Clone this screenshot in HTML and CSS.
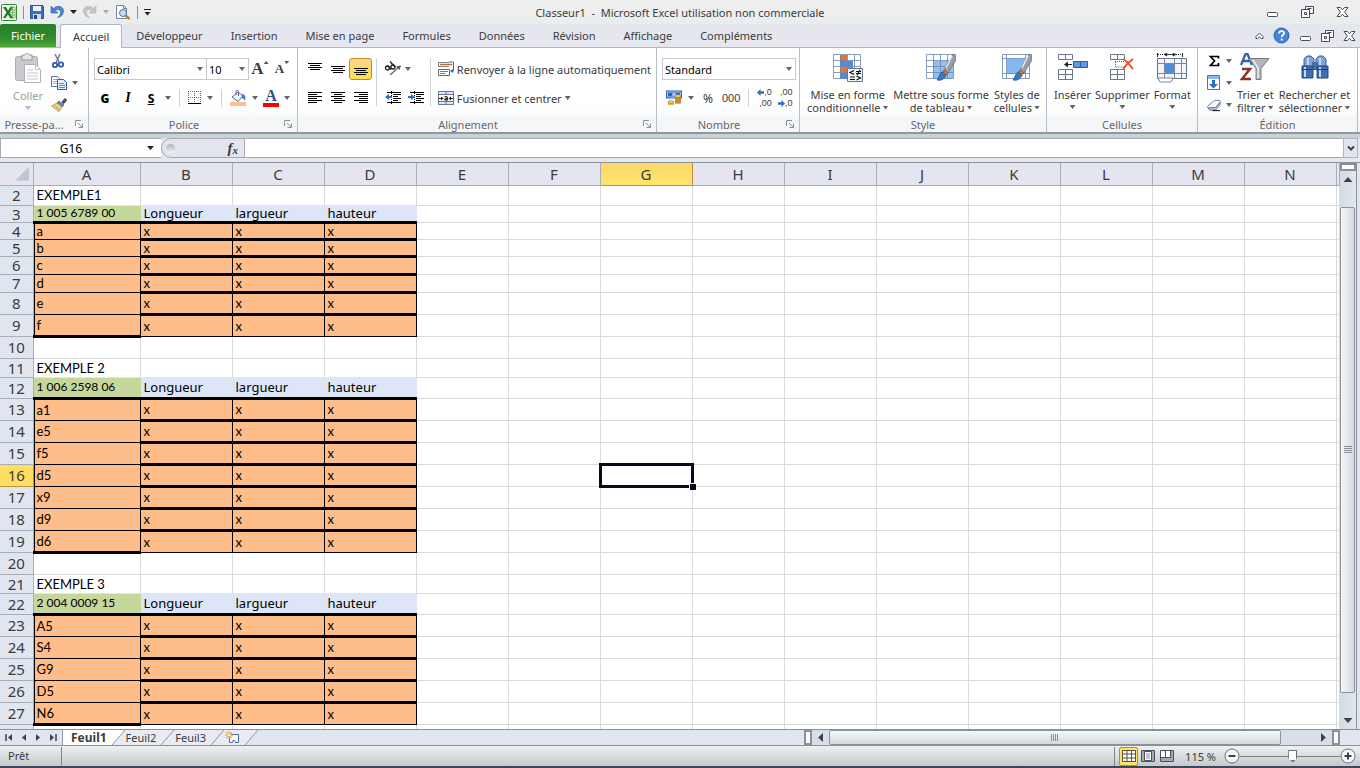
FILE: index.html
```html
<!DOCTYPE html>
<html lang="fr">
<head>
  <meta charset="UTF-8">
  <meta name="viewport" content="width=device-width, initial-scale=1.0">
  <title>Classeur1 - Microsoft Excel</title>
  <link rel="stylesheet" href="styles.css">
</head>
<body>
  <!-- Shared icons -->
  <svg class="defs" aria-hidden="true">
    <symbol id="i-launch" viewBox="0 0 8 8"><path d="M.5 6V.5H6M3.5 7.5h4v-4M3 3l4 4" fill="none" stroke="#8a9097"/></symbol>
    <symbol id="i-min" viewBox="0 0 13 12"><rect x="1.5" y="6.500" width="10" height="4" rx="1" fill="#fff" stroke="#454a5c"/></symbol>
    <symbol id="i-restore" viewBox="0 0 13 12"><path d="M4.500.5h8v7h-8zM6.500 2.500h4" fill="#fff" stroke="#454a5c"/><path d="M.5 3.500h8v8h-8z" fill="#fff" stroke="#454a5c"/><path d="M3.500 6.500h2v2h-2z" fill="none" stroke="#454a5c"/></symbol>
    <symbol id="i-close" viewBox="0 0 13 12"><path d="M1 1.500h3.500l2 2.300 2-2.300H12L8.600 6l3.400 4.500H8.500l-2-2.300-2 2.300H1L4.400 6z" fill="#fff" stroke="#454a5c"/></symbol>
    <symbol id="i-brush" viewBox="0 0 20 30"><path d="M17 1l3 1v5l-8 13-4-3z" fill="#9a9da3" stroke="#686c74" stroke-width=".7"/><path d="M16 3l-6 12" stroke="#e8eaec" stroke-width="1.500"/><path d="M8 17l4 3-2 2-4-3z" fill="#c7793b" stroke="#8a4b1c" stroke-width=".6"/><path d="M6 19l4 3c-1 4-5 6-9 5 2-2 2-6 5-8z" fill="#3d78bd" stroke="#24508a" stroke-width=".7"/></symbol>
  </svg>

  <header class="titlebar">
    <div class="quick">
      <svg width="16" height="17" viewBox="0 0 16 17"><rect x=".5" y=".5" width="15" height="16" rx="1" fill="#eef6ea" stroke="#2c8a32"/><path d="M9 3h5v11H9M9 6h5M9 8.500h5M9 11h5M11.500 3v11" fill="none" stroke="#7db578"/><path d="M2 3h3l2 3.500L9.500 3H12L8.500 8.500 12 14H9l-2-3.500L4.500 14H2l3.500-5.500z" fill="#207a2a"/></svg>
      <span class="bar"></span>
      <button aria-label="Enregistrer"><svg width="14" height="14" viewBox="0 0 14 14"><path d="M.5.500h12l1 1v12H.5z" fill="#3f6fc2" stroke="#2c4f95"/><path d="M3 1h8v5H3z" fill="#eef4fc"/><path d="M3 9h8v5H3z" fill="#cfdcf0"/><path d="M4 10h3v4H4z" fill="#27457f"/></svg></button>
      <button aria-label="Annuler"><svg width="14" height="14" viewBox="0 0 14 14"><path d="M1 1v7h7L5.500 5.500C8 3.500 11 5 10.500 8c-.3 2-1.500 3.500-3 4.500C11 12 13.500 9.500 13.500 6 13.500 1.500 7.500-.5 3.500 3.500z" fill="#4b84d2" stroke="#2d5da5" stroke-width=".6"/></svg></button>
      <i class="arrow dark"></i>
      <button aria-label="Rétablir"><svg width="14" height="14" viewBox="0 0 14 14"><path d="M13 1v7H6l2.500-2.500C6 3.500 3 5 3.500 8c.3 2 1.500 3.500 3 4.500C3 12 .5 9.500.5 6 .5 1.500 6.500-.5 10.500 3.500z" fill="#c3c6cb" stroke="#aaaeb5" stroke-width=".6"/></svg></button>
      <i class="arrow pale"></i>
      <button aria-label="Aperçu"><svg width="16" height="15" viewBox="0 0 16 15"><path d="M1.500.5h7l3 3v10h-10z" fill="#fff" stroke="#77839a"/><path d="M8.500.5v3h3" fill="none" stroke="#77839a"/><circle cx="8" cy="8" r="3.500" fill="#bfe0f5" stroke="#5a6f8c"/><path d="M10.500 10.500l4 3.500" stroke="#c08030" stroke-width="2.500"/></svg></button>
      <span class="bar"></span>
      <button aria-label="Personnaliser" class="more"><i class="arrow dark"></i></button>
    </div>
    <div class="title">Classeur1&nbsp; -&nbsp; Microsoft Excel utilisation non commerciale</div>
    <div class="window-buttons">
      <button aria-label="Réduire"><svg width="13" height="12"><use href="#i-min"/></svg></button>
      <button aria-label="Restaurer"><svg width="13" height="12"><use href="#i-restore"/></svg></button>
      <button aria-label="Fermer"><svg width="13" height="12"><use href="#i-close"/></svg></button>
    </div>
  </header>

  <nav class="tabs">
    <button class="file">Fichier</button>
    <button class="active">Accueil</button>
    <button>Développeur</button>
    <button>Insertion</button>
    <button>Mise en page</button>
    <button>Formules</button>
    <button>Données</button>
    <button>Révision</button>
    <button>Affichage</button>
    <button>Compléments</button>
    <div class="tab-tools">
      <button aria-label="Réduire le ruban"><svg width="9" height="8" viewBox="0 0 9 8"><path d="M4.500 1L8 4.500v2H6.300L4.500 5 2.700 6.500H1v-2z" fill="#fff" stroke="#454a5c"/></svg></button>
      <button aria-label="Aide"><svg width="17" height="17" viewBox="0 0 17 17"><circle cx="8.500" cy="8.500" r="7.500" fill="#4685da" stroke="#2b5fae"/><path d="M6 6.500c0-3.500 5.500-3 5 0-.3 1.500-2.300 1.700-2.300 3.500M8.700 11.500v2" fill="none" stroke="#fff" stroke-width="1.800"/></svg></button>
      <button aria-label="Réduire le classeur"><svg width="13" height="12"><use href="#i-min"/></svg></button>
      <button aria-label="Restaurer le classeur"><svg width="13" height="12"><use href="#i-restore"/></svg></button>
      <button aria-label="Fermer le classeur"><svg width="13" height="12"><use href="#i-close"/></svg></button>
    </div>
  </nav>

  <main class="ribbon">
    <section class="group clipboard">
      <div class="group-body">
        <button class="big disabled">
          <svg width="28" height="31" viewBox="0 0 28 31"><rect x="1.500" y="3.500" width="22" height="24" rx="2" fill="#c9cbce" stroke="#abaeb2"/><path d="M8 2h3c0-2 4-2 4 0h3v5H8z" fill="#e6e7e9" stroke="#96999d"/><path d="M10.500 11.500h11l5 5v13h-16z" fill="#fff" stroke="#b0b3b7"/><path d="M21.500 11.500v5h5M13 17h6M13 20h11M13 23h11M13 26h11" fill="none" stroke="#c4c6c9"/></svg>
          <span>Coller</span><i class="arrow"></i>
        </button>
        <div class="stack">
          <button aria-label="Couper"><svg width="14" height="15" viewBox="0 0 14 15"><path d="M4 0l4.500 9M9 0L5 9" stroke="#6c7c92" stroke-width="1.500"/><circle cx="4" cy="11" r="2.200" fill="none" stroke="#2a5db0" stroke-width="1.800"/><circle cx="10" cy="10.500" r="2.200" fill="none" stroke="#2a5db0" stroke-width="1.800"/></svg></button>
          <button aria-label="Copier"><svg width="16" height="14" viewBox="0 0 16 14"><path d="M.5.500h6l2 2v8h-8z" fill="#fff" stroke="#4b74ae"/><path d="M2 3.500h4M2 5.500h4M2 7.500h4" stroke="#8fb0dc"/><path d="M6.500 3.500h6l3 3v7h-9z" fill="#e4effc" stroke="#2f5c9e"/><path d="M8 7.500h5M8 9.500h6M8 11.500h6" stroke="#5e8ac6"/></svg><i class="arrow"></i></button>
          <button aria-label="Reproduire la mise en forme"><svg width="16" height="14" viewBox="0 0 16 14"><path d="M11 4l3-3.500 1.500 1.500L13 5.500z" fill="#4b5b78" stroke="#2c3a55"/><path d="M8 3l5 4-2 2-5-4z" fill="#6f87ae" stroke="#44597c" stroke-width=".7"/><path d="M6 5l5 4-3 4.500L.5 8z" fill="#f0d588" stroke="#a57c2e" stroke-width=".7"/><path d="M4 7.500l4 4" stroke="#b3883c"/></svg></button>
        </div>
      </div>
      <div class="group-label">Presse-pa...<button class="launch" aria-label="Options Presse-papiers"><svg width="8" height="8"><use href="#i-launch"/></svg></button></div>
    </section>

    <section class="group font">
      <div class="group-body rows">
        <div class="row">
          <label class="combo name"><select aria-label="Police"><option>Calibri</option></select><i class="arrow"></i></label>
          <label class="combo size"><select aria-label="Taille de police"><option>10</option></select><i class="arrow"></i></label>
          <button class="grow" aria-label="Agrandir la police"><b>A</b><i class="up"></i></button>
          <button class="shrink" aria-label="Réduire la police"><b>A</b><i class="down"></i></button>
        </div>
        <div class="row formats">
          <button class="bold">G</button>
          <button class="italic">I</button>
          <button class="underline">S</button>
          <i class="arrow"></i>
          <span class="rule"></span>
          <button aria-label="Bordures"><svg width="14" height="14" viewBox="0 0 14 14"><path d="M.5 0v13M6.500 0v13M12.500 0v13M0 .5h13M0 6.500h13" fill="none" stroke="#666" stroke-dasharray="1 1"/><path d="M0 12.500h13" stroke="#000" stroke-width="1"/></svg></button>
          <i class="arrow"></i>
          <span class="rule"></span>
          <button aria-label="Couleur de remplissage"><svg width="17" height="16" viewBox="0 0 17 16"><path d="M2 7l6-5 5 4-5 5.500z" fill="#f3f8fd" stroke="#4a6ea0"/><path d="M6 5V1.500c0-1.500 2.500-1.500 2.500 0V6" fill="none" stroke="#5a6b83"/><path d="M12 4c3 0 4 3 3 7-1-2-2-3-3.500-3z" fill="#3b7bd0"/><path d="M0 12h16v4H0z" fill="#ffbe8a"/></svg></button>
          <i class="arrow"></i>
          <button class="color" aria-label="Couleur de police"><b>A</b></button>
          <i class="arrow"></i>
        </div>
      </div>
      <div class="group-label">Police<button class="launch" aria-label="Options Police"><svg width="8" height="8"><use href="#i-launch"/></svg></button></div>
    </section>

    <section class="group alignment">
      <div class="group-body">
        <div class="rows">
          <div class="row">
            <button aria-label="Aligner en haut"><svg width="14" height="14" viewBox="0 0 14 14"><path d="M0 1.500h14M2 3.500h10M0 5.500h14M2 7.500h10" stroke="#000"/></svg></button>
            <button aria-label="Aligner au centre"><svg width="14" height="14" viewBox="0 0 14 14"><path d="M0 4.500h14M2 6.500h10M0 8.500h14M2 10.500h10" stroke="#000"/></svg></button>
            <button aria-label="Aligner en bas" class="pressed"><svg width="14" height="14" viewBox="0 0 14 14"><path d="M0 6.500h14M2 8.500h10M0 10.500h14M2 12.500h10" stroke="#000"/></svg></button>
          </div>
          <div class="row">
            <button aria-label="Aligner à gauche"><svg width="14" height="12" viewBox="0 0 14 12"><path d="M0 .5h14M0 2.500h9M0 4.500h14M0 6.500h9M0 8.500h14M0 10.500h9" stroke="#000"/></svg></button>
            <button aria-label="Centrer"><svg width="14" height="12" viewBox="0 0 14 12"><path d="M0 .5h14M3 2.500h8M0 4.500h14M3 6.500h8M0 8.500h14M3 10.500h8" stroke="#000"/></svg></button>
            <button aria-label="Aligner à droite"><svg width="14" height="12" viewBox="0 0 14 12"><path d="M0 .5h14M5 2.500h9M0 4.500h14M5 6.500h9M0 8.500h14M5 10.500h9" stroke="#000"/></svg></button>
          </div>
        </div>
        <span class="rule tall"></span>
        <div class="rows">
          <div class="row orient">
            <button aria-label="Orientation"><svg width="18" height="16" viewBox="0 0 18 16"><g fill="none" stroke="#222" stroke-width="1.300"><circle cx="3.500" cy="7" r="2"/><path d="M3.500 4.500l3.500 4"/><path d="M6 .500l5 5.500"/><circle cx="9" cy="6" r="2"/></g><path d="M6 14l9-8" stroke="#666" stroke-width="1.300"/><path d="M17 4.500l-5 1 3.500 3.500z" fill="#555"/></svg></button>
            <i class="arrow"></i>
          </div>
          <div class="row">
            <button aria-label="Diminuer le retrait"><svg width="16" height="14" viewBox="0 0 16 14"><path d="M2 1.500h14M8 3.500h8M8 5.500h5M8 7.500h8M8 9.500h5M2 11.500h14" stroke="#000"/><path d="M6.500 0v14" stroke="#000" stroke-dasharray="1 1"/><path d="M0 6l4-3v2h3v2H4v2z" fill="#2c6fc4"/></svg></button>
            <button aria-label="Augmenter le retrait"><svg width="16" height="14" viewBox="0 0 16 14"><path d="M2 1.500h14M8 3.500h8M8 5.500h5M8 7.500h8M8 9.500h5M2 11.500h14" stroke="#000"/><path d="M6.500 0v14" stroke="#000" stroke-dasharray="1 1"/><path d="M7 6L3 3v2H0v2h3v2z" fill="#2c6fc4"/></svg></button>
          </div>
        </div>
        <span class="rule tall"></span>
        <div class="rows">
          <button class="wide"><svg width="16" height="16" viewBox="0 0 16 16"><path d="M1 1.500h10M1 5.500h10M.5 1v5" fill="none" stroke="#7c8796"/><path d="M2 3.500h12" stroke="#c8632b" stroke-width="1.500"/><path d="M.5 8.500h11v6H.5z" fill="#fff" stroke="#5b6b80"/><path d="M2 10.500h8M2 12.500h5" stroke="#c8632b"/><path d="M11 1h4.500v9H13" fill="none" stroke="#5b6b80"/><path d="M12 10l3-2v4z" fill="#2c6fc4"/></svg>Renvoyer à la ligne automatiquement</button>
          <button class="wide"><svg width="16" height="14" viewBox="0 0 16 14"><path d="M.5.500h15v13H.5zM.5 3.500h15M.5 10.500h15M8 .5v3M8 10.500v3" fill="#dce8f6" stroke="#66788f"/><path d="M1 4h14v6H1z" fill="#fff"/><path d="M1 7.500h4M11 7.500h4" stroke="#222"/><path d="M3 5.500l2.500 2-2.500 2zM13 5.500l-2.500 2 2.500 2z" fill="#222"/><path d="M6.500 6c3-1 3 0 3 3.500M9 7.500c-3 0-3 2 0 1.500" fill="none" stroke="#222" stroke-width="1.200"/></svg>Fusionner et centrer<i class="arrow"></i></button>
        </div>
      </div>
      <div class="group-label">Alignement<button class="launch" aria-label="Options Alignement"><svg width="8" height="8"><use href="#i-launch"/></svg></button></div>
    </section>

    <section class="group number">
      <div class="group-body rows">
        <div class="row">
          <label class="combo format"><select aria-label="Format de nombre"><option>Standard</option></select><i class="arrow"></i></label>
        </div>
        <div class="row numbers">
          <button aria-label="Format comptable"><svg width="16" height="16" viewBox="0 0 16 16"><path d="M0 .5h16v8H0z" fill="#2f64b5"/><path d="M1.500 2h13v5h-13z" fill="none" stroke="#a9c8ee"/><circle cx="8" cy="4.500" r="2" fill="#a9c8ee"/><path d="M9 6h6v8H9z" fill="#e9b448"/><path d="M9 8h6M9 10h6M9 12h6" stroke="#9a661a"/><ellipse cx="12" cy="6" rx="3" ry="1.300" fill="#f8da86" stroke="#9a661a" stroke-width=".6"/><path d="M2 12h6v3H2z" fill="#e9b448"/><ellipse cx="5" cy="12" rx="3" ry="1.300" fill="#f8da86" stroke="#9a661a" stroke-width=".6"/></svg></button>
          <i class="arrow"></i>
          <button class="percent">%</button>
          <button class="zeros">000</button>
          <span class="rule"></span>
          <button class="decimals" aria-label="Ajouter une décimale"><span><svg width="7" height="7" viewBox="0 0 6 6"><path d="M0 3l3-3v2h3v2H3v2z" fill="#2c6fc4"/></svg>,0</span><span>,00</span></button>
          <button class="decimals" aria-label="Réduire les décimales"><span>,00</span><span><svg width="7" height="7" viewBox="0 0 6 6"><path d="M6 3L3 0v2H0v2h3v2z" fill="#2c6fc4"/></svg>,0</span></button>
        </div>
      </div>
      <div class="group-label">Nombre<button class="launch" aria-label="Options Nombre"><svg width="8" height="8"><use href="#i-launch"/></svg></button></div>
    </section>

    <section class="group styles">
      <div class="group-body">
        <button class="big">
          <svg width="32" height="30" viewBox="0 0 32 30"><path d="M1.500 1.500h27v24h-27z" fill="#fff"/><path d="M8 2h7v6H8zM8 14h13v6H8z" fill="#f0702a"/><path d="M8 8h13v6H8zM8 20h7v6H8z" fill="#4b8ee0"/><path d="M1.500 1.500h27v24h-27zM1.500 7.500h27M1.500 13.500h27M1.500 19.500h27M8.500 1.500v24M15.500 1.500v24M22.500 1.500v24" fill="none" stroke="#6a87b3" stroke-width=".8"/><path d="M15.500 15.500h15v13h-15z" fill="#f4f6f8" stroke="#68778c"/><path d="M22 17.500l-4 2 4 2M18 24h5M18 26.500h5M24 18.500h5M24 20.500h5M28 17l-3 5M24.500 23l4 2-4 2" fill="none" stroke="#111" stroke-width="1.200"/></svg>
          <span>Mise en forme</span><span>conditionnelle<i class="arrow"></i></span>
        </button>
        <button class="big">
          <svg width="32" height="30" viewBox="0 0 32 30"><path d="M1.500 1.500h27v24h-27z" fill="#fff"/><path d="M8 8h20v18H8z" fill="#93c0f0"/><path d="M1.500 1.500h27v24h-27zM1.500 7.500h27M1.500 13.500h27M1.500 19.500h27M8.500 1.500v24M15.500 1.500v24M22.500 1.500v24" fill="none" stroke="#6a87b3" stroke-width=".8"/><use href="#i-brush" x="11" y="0" width="20" height="30"/></svg>
          <span>Mettre sous forme</span><span>de tableau<i class="arrow"></i></span>
        </button>
        <button class="big">
          <svg width="32" height="30" viewBox="0 0 32 30"><path d="M1.500 1.500h27v24h-27z" fill="#fff"/><path d="M6 6h18v15H6z" fill="#83b8f2"/><path d="M1.500 1.500h27v24h-27zM1.500 5.500h27M1.500 20.500h27M5.500 1.500v24M24.500 1.500v24" fill="none" stroke="#6a87b3" stroke-width=".8"/><use href="#i-brush" x="11" y="0" width="20" height="30"/></svg>
          <span>Styles de</span><span>cellules<i class="arrow"></i></span>
        </button>
      </div>
      <div class="group-label">Style</div>
    </section>

    <section class="group cells">
      <div class="group-body">
        <button class="big">
          <svg width="32" height="30" viewBox="0 0 32 30"><path d="M1.500 1.500h14v5h-14zM8.500 1.500v5M1.500 16.500h14v10h-14zM8.500 16.500v10M1.500 21.500h14" fill="#fff" stroke="#6b7688"/><path d="M16.500 8.500h14v6h-14z" fill="#5b9ae8" stroke="#2b60ac"/><path d="M23.500 8.500v6" stroke="#2b60ac"/><path d="M7 11.500l4-3v2.500h4v1h-4v2.500z" fill="#222"/></svg>
          <span>Insérer</span><i class="arrow"></i>
        </button>
        <button class="big">
          <svg width="32" height="30" viewBox="0 0 32 30"><path d="M4.500 1.500h14v5h-14zM11.500 1.500v5M4.500 16.500h14v10h-14zM11.500 16.500v10M4.500 21.500h14" fill="#fff" stroke="#6b7688"/><path d="M9.500 9v5h10M9 8.500h9" fill="none" stroke="#2b60ac" stroke-dasharray="1 1"/><path d="M17 6c4 2 7 6 10 10M27 6c-4 3-8 6-10 11" fill="none" stroke="#ee4a1c" stroke-width="1.800"/></svg>
          <span>Supprimer</span><i class="arrow"></i>
        </button>
        <button class="big">
          <svg width="32" height="30" viewBox="0 0 32 30"><path d="M1.500 0v4M26.500 0v4" stroke="#222"/><path d="M2 1.500h24" stroke="#222" stroke-dasharray="1 1"/><path d="M8 1.500l3-1.500v3zM20 1.500l-3-1.500v3zM11 1.500h6" fill="#222" stroke="#222" stroke-width=".6"/><path d="M1.500 5.500h29v20h-29z" fill="#f2f6fb" stroke="#6b7688"/><path d="M8.500 5.500v20M18.500 5.500v20M25.500 5.500v20M1.500 10.500h29M1.500 20.500h29" stroke="#7c8798"/><path d="M9 11h9v9H9z" fill="#4b8ee0"/><path d="M2 25h15l-2 4H4z" fill="#fff" stroke="#7c8798"/></svg>
          <span>Format</span><i class="arrow"></i>
        </button>
      </div>
      <div class="group-label">Cellules</div>
    </section>

    <section class="group editing">
      <div class="group-body">
        <div class="stack">
          <button aria-label="Somme"><svg width="14" height="14" viewBox="0 0 14 14"><path d="M11.500 4.500V2.500H3.500l4 4.500-4 4.500h8V9" fill="none" stroke="#000" stroke-width="1.700"/></svg><i class="arrow"></i></button>
          <button aria-label="Remplissage"><svg width="14" height="16" viewBox="0 0 14 16"><path d="M.5.500h12v14H.5z" fill="#fff" stroke="#5475a8"/><path d="M1 1h11v3H1z" fill="#8db7ea"/><path d="M5 5h3v4h3l-4.500 4.500L2 9h3z" fill="#2370cf"/></svg><i class="arrow"></i></button>
          <button aria-label="Effacer"><svg width="14" height="13" viewBox="0 0 15 13"><path d="M8 1h5c1 0 1.500 1 1 2l-5 6H2C.5 9 0 8 1 7z" fill="#fbfcfe" stroke="#68778e"/><path d="M9 9l5-6v3l-5 5.500H3L1 9z" fill="#b9c8de" stroke="#68778e"/><path d="M6 12h8" stroke="#000"/></svg><i class="arrow"></i></button>
        </div>
        <button class="big">
          <svg width="32" height="30" viewBox="0 0 32 30"><path d="M2 12L6.500 1h2L13 12M4 8h7" fill="none" stroke="#2f63b0" stroke-width="2.300"/><path d="M3 16h8L3 26h9" fill="none" stroke="#8a3524" stroke-width="2.500"/><path d="M10 5.500h20l-8 10v11h-5v-11z" fill="#b4b7ba" stroke="#74787d"/><path d="M14 7l5 8v10" fill="none" stroke="#edeef0" stroke-width="1.500"/></svg>
          <span>Trier et</span><span>filtrer<i class="arrow"></i></span>
        </button>
        <button class="big">
          <svg width="32" height="30" viewBox="0 0 32 30"><path d="M8 3h4l3 3v8H5V6zM20 3h4l3 3v8H17V6z" fill="#7fa4d8" stroke="#3c5f95"/><path d="M13 9h6v8h-6z" fill="#4a70aa"/><path d="M3 13h11v12H3zM18 13h11v12H18z" fill="#3f6cb2" stroke="#24467e"/><path d="M6 14v10M21 14v10M9 5v7M21 5v7" stroke="#c4d9f5" stroke-width="2"/><path d="M3 16.500h11M18 16.500h11" stroke="#1f3f75"/></svg>
          <span>Rechercher et</span><span>sélectionner<i class="arrow"></i></span>
        </button>
      </div>
      <div class="group-label">Édition</div>
    </section>
  </main>

  <div class="formula">
    <div class="namebox"><input type="text" value="G16" aria-label="Zone Nom"><i class="arrow dark"></i></div>
    <div class="fx"><span class="dot"></span><button aria-label="Insérer une fonction">f<small>x</small></button></div>
    <input class="formula-input" type="text" aria-label="Barre de formule">
    <button class="expand" aria-label="Développer la barre de formule"><svg width="8" height="7" viewBox="0 0 8 7"><path d="M1 1.500l3 3 3-3" fill="none" stroke="#3e4250" stroke-width="2"/></svg></button>
  </div>

  <div class="workspace">
    <div class="viewport">
      <table class="sheet">
        <colgroup id="cols"></colgroup>
        <thead id="head"></thead>
        <tbody id="rows"></tbody>
      </table>
    </div>
    <div class="vscroll">
      <span class="split"></span>
      <button aria-label="Défiler vers le haut"><i class="tri up"></i></button>
      <div class="track"><div class="thumb"><span class="grip"></span></div></div>
      <button aria-label="Défiler vers le bas"><i class="tri down"></i></button>
    </div>
  </div>

  <div class="sheetbar">
    <div class="sheet-nav">
      <button aria-label="Première feuille"><svg width="8" height="7" viewBox="0 0 8 7"><path d="M1 0v7" stroke="#3a3f52" stroke-width="1.500"/><path d="M7 0v7L3 3.500z" fill="#3a3f52"/></svg></button>
      <button aria-label="Feuille précédente"><svg width="8" height="7" viewBox="0 0 8 7"><path d="M6 0v7L2 3.500z" fill="#3a3f52"/></svg></button>
      <button aria-label="Feuille suivante"><svg width="8" height="7" viewBox="0 0 8 7"><path d="M2 0v7l4-3.500z" fill="#3a3f52"/></svg></button>
      <button aria-label="Dernière feuille"><svg width="8" height="7" viewBox="0 0 8 7"><path d="M7 0v7" stroke="#3a3f52" stroke-width="1.500"/><path d="M1 0v7l4-3.500z" fill="#3a3f52"/></svg></button>
    </div>
    <button class="sheet-tab current">Feuil1</button>
    <svg width="14" height="15" viewBox="0 0 14 15"><path d="M0 0h14L1 15H0z" fill="#fff"/><path d="M14 0v15H1z" fill="#e9eaf2"/><path d="M14 0L1 15" stroke="#8f96a5"/></svg>
    <button class="sheet-tab">Feuil2</button>
    <svg width="14" height="15" viewBox="0 0 14 15"><path d="M0 0h14v15H0z" fill="#e9eaf2"/><path d="M14 0L1 15" stroke="#8f96a5"/></svg>
    <button class="sheet-tab">Feuil3</button>
    <svg width="14" height="15" viewBox="0 0 14 15"><path d="M0 0h14v15H0z" fill="#e9eaf2"/><path d="M14 0L1 15" stroke="#8f96a5"/></svg>
    <button class="sheet-tab new" aria-label="Insérer une feuille"><svg width="15" height="13" viewBox="0 0 15 13"><path d="M4.500 3.500h9v8h-3l-1-2H8l-.5 2h-3z" fill="#f4f9ff" stroke="#4d6d9c"/><path d="M4 0v8M0 4h8M1 1l6 6M7 1L1 7" stroke="#e09a2c"/><circle cx="4" cy="4" r="1.500" fill="#fff3b0"/></svg></button>
    <svg width="14" height="15" viewBox="0 0 14 15"><path d="M0 0h14L1 15H0z" fill="#e9eaf2"/><path d="M14 0L1 15" stroke="#8f96a5"/></svg>
    <div class="hscroll">
      <span class="split"></span>
      <button aria-label="Défiler vers la gauche"><i class="tri left"></i></button>
      <div class="track"><div class="thumb"><span class="grip"></span></div></div>
      <button aria-label="Défiler vers la droite"><i class="tri right"></i></button>
      <span class="split"></span>
    </div>
  </div>

  <footer class="status">
    <span class="ready">Prêt</span>
    <div class="views">
      <button class="on" aria-label="Normal"><svg width="14" height="12" viewBox="0 0 14 12"><path d="M.5.500h13v11H.5zM.5 4h13M.5 8h13M5 .5v11M9.500.5v11" fill="#fff" stroke="#5a5340"/></svg></button>
      <button aria-label="Mise en page"><svg width="14" height="12" viewBox="0 0 14 12"><path d="M.5.500h13v11H.5z" fill="#a4a8b2" stroke="#4c5060"/><path d="M3.500 1.500h7v9h-7z" fill="#fff" stroke="#4c5060"/><path d="M5 4h4M5 6h4M5 8h4" stroke="#4c5060" stroke-width=".7"/></svg></button>
      <button aria-label="Aperçu des sauts de page"><svg width="14" height="12" viewBox="0 0 14 12"><path d="M.5.500h13v11H.5z" fill="#a4a8b2" stroke="#4c5060"/><path d="M1 1h4v6H1zM6 1h4v6H6z" fill="#fff"/><path d="M5.500 0v7.500M10.500 0v7.500H1" fill="none" stroke="#4c5060"/></svg></button>
    </div>
    <span class="zoom-value">115 %</span>
    <button class="zoom-btn" aria-label="Zoom arrière"><svg width="16" height="16" viewBox="0 0 16 16"><circle cx="8" cy="8" r="7" fill="#f6f7f8" stroke="#6c707a"/><path d="M4.500 8h7" stroke="#3e4250" stroke-width="2"/></svg></button>
    <input class="zoom" type="range" min="0" max="100" value="53" aria-label="Zoom">
    <button class="zoom-btn" aria-label="Zoom avant"><svg width="16" height="16" viewBox="0 0 16 16"><circle cx="8" cy="8" r="7" fill="#f6f7f8" stroke="#6c707a"/><path d="M4.500 8h7M8 4.500v7" stroke="#3e4250" stroke-width="2"/></svg></button>
  </footer>

  <script src="script.js"></script>
</body>
</html>
```
FILE: styles.css
```css
* {
  box-sizing: border-box;
}
body {
  margin: 0;
  height: 100vh;
  display: flex;
  flex-direction: column;
  overflow: hidden;
  font-family: "Noto Sans", "Open Sans", sans-serif;
  font-size: 11px;
  color: #3b3b3b;
  background: #dfe6ef;
}
button {
  display: flex;
  align-items: center;
  justify-content: center;
  flex: none;
  margin: 0;
  padding: 0;
  border: 0;
  background: none;
  font: inherit;
  color: inherit;
}
svg {
  display: block;
  flex: none;
}
.defs {
  position: absolute;
  width: 0;
  height: 0;
}
.arrow {
  flex: none;
  width: 6px;
  height: 4px;
  background: #5f6470;
  clip-path: polygon(0 0, 100% 0, 50% 100%);
}
.arrow.dark {
  width: 7px;
  background: #222;
}
.arrow.pale {
  background: #a7abb3;
}

/* Title bar */
.titlebar {
  display: grid;
  grid-template-columns: 1fr auto 1fr;
  align-items: center;
  height: 24px;
  flex: none;
  background: linear-gradient(#eeeeee 60%, #e6eeee);
}
.quick {
  display: flex;
  align-items: center;
  gap: 6px;
  padding-left: 1px;
}
.quick .bar {
  width: 1px;
  height: 13px;
  background: #8b8f96;
}
.more {
  border-top: 1px solid #222;
  padding-top: 2px;
}
.window-buttons {
  display: flex;
  justify-content: flex-end;
  gap: 22px;
  padding-right: 11px;
}

/* Ribbon tabs */
.tabs {
  display: flex;
  height: 24px;
  flex: none;
  background: #e6e6ef;
  border-bottom: 1px solid #b2b6c0;
}
.tabs > button {
  padding: 0 14px;
}
.tabs .file {
  width: 56px;
  padding: 0;
  margin-right: 4px;
  color: #fff;
  border-radius: 2px 2px 0 0;
  background: linear-gradient(#2b7e2b, #2f8a2d 60%, #51a83c);
}
.tabs .active {
  height: 24px;
  padding: 0 12px;
  border: 1px solid #b2b6c0;
  border-bottom: 0;
  border-radius: 3px 3px 0 0;
  background: #fff;
}
.tab-tools {
  display: flex;
  align-items: center;
  gap: 9px;
  margin-left: auto;
  padding-right: 4px;
}

/* Ribbon */
.ribbon {
  display: flex;
  height: 86px;
  flex: none;
  background: linear-gradient(#fff, #fff 60%, #f4f6f7);
  border-bottom: 2px solid #8d999c;
}
.group {
  display: flex;
  flex-direction: column;
  flex: none;
  border-right: 1px solid #b9bdc7;
}
.clipboard { width: 89px; }
.font { width: 209px; }
.alignment { width: 359px; }
.number { width: 143px; }
.styles { width: 247px; }
.cells { width: 151px; }
.editing { width: 160px; }
.group-body {
  display: flex;
  flex: 1;
  padding: 5px 5px 0;
}
.group-label {
  display: flex;
  align-items: center;
  justify-content: center;
  position: relative;
  height: 16px;
  color: #66676b;
  background: #f5f6f8;
}
.clipboard .group-label {
  padding-right: 20px;
}
.alignment .group-label,
.number .group-label {
  padding-right: 18px;
}
.font .group-label {
  padding-right: 18px;
}
.launch {
  position: absolute;
  right: 5px;
  bottom: 4px;
}
.rows {
  display: flex;
  flex-direction: column;
  gap: 7px;
}
.group-body.rows {
  padding-top: 10px;
}
.row {
  display: flex;
  align-items: center;
  height: 22px;
}
.rule {
  width: 1px;
  height: 18px;
  background: #cfd2d9;
}
.rule.tall {
  height: 48px;
  margin-top: 10px;
}
.big {
  flex-direction: column;
  justify-content: flex-start;
  line-height: 13px;
  white-space: nowrap;
}
.big svg {
  margin-bottom: 5px;
}
.big span {
  display: flex;
  align-items: center;
  gap: 2px;
}
.big > .arrow {
  margin-top: 4px;
}
.stack {
  display: flex;
  flex-direction: column;
  gap: 6px;
}
.stack button {
  height: 16px;
  gap: 5px;
  justify-content: flex-start;
}
.clipboard .group-body {
  gap: 8px;
  padding-left: 13px;
}
.big.disabled {
  color: #93a08c;
}
.big.disabled .arrow {
  background: #b4b8bd;
}
.combo {
  display: flex;
  align-items: center;
  flex: none;
  height: 22px;
  padding-right: 3px;
  border: 1px solid #c5c9d2;
  background: #fff;
}
.combo select {
  flex: 1;
  min-width: 0;
  height: 20px;
  padding: 0 2px;
  border: 0;
  appearance: none;
  background: none;
  font: inherit;
  color: #000;
}
.combo.name { width: 113px; }
.combo.size {
  width: 43px;
  margin-left: -1px;
}
.combo.format { width: 134px; }
.grow,
.shrink {
  width: 22px;
  font-family: "Liberation Serif", serif;
  line-height: 16px;
}
.grow {
  font-size: 17px;
}
.shrink {
  font-size: 13px;
}
.up,
.down {
  width: 5px;
  height: 3px;
  align-self: flex-start;
  background: #2f5fa8;
}
.up { clip-path: polygon(50% 0, 100% 100%, 0 100%); }
.down { clip-path: polygon(0 0, 100% 0, 50% 100%); }
.formats {
  gap: 5px;
  padding-left: 2px;
}
.bold,
.italic,
.underline {
  width: 18px;
  color: #000;
  font-size: 12px;
  font-weight: bold;
}
.bold { font-weight: 900; }
.italic {
  font-family: "Liberation Serif", serif;
  font-size: 14px;
  font-style: italic;
}
.underline { text-decoration: underline; }
.formats .rule { margin: 0 3px; }
.color {
  width: 16px;
  height: 17px;
  align-items: flex-end;
  border-bottom: 4px solid #f00;
  font-family: "Liberation Serif", serif;
  font-size: 16px;
  line-height: 14px;
  color: #2f4f8c;
}
.alignment .group-body {
  padding-top: 0;
}
.alignment .rows {
  padding-top: 10px;
}
.alignment .row button {
  width: 23px;
  height: 22px;
}
.alignment .row .pressed {
  border: 1px solid #c08a2c;
  border-radius: 3px;
  background: linear-gradient(#fcd48c, #ffe04f);
}
.alignment .rule {
  margin-left: 4px;
  margin-right: 5px;
}
.alignment .rule + .rows + .rule {
  margin-left: 2px;
  margin-right: 7px;
}
.alignment .wide {
  height: 22px;
  gap: 3px;
  justify-content: flex-start;
  white-space: nowrap;
}
.number .group-body {
  padding-left: 5px;
}
.numbers {
  gap: 6px;
  padding-left: 4px;
}
.percent {
  width: 16px;
  font-size: 12px;
}
.zeros {
  font-family: "Liberation Sans", sans-serif;
}
.numbers .rule {
  margin: 0 2px;
}
.decimals {
  flex-direction: column;
  align-items: flex-end;
  font-family: "Liberation Sans", sans-serif;
  font-size: 9px;
  line-height: 11px;
}
.decimals span {
  display: flex;
  align-items: center;
}
.styles .group-body,
.cells .group-body {
  justify-content: space-between;
  padding-left: 7px;
  padding-right: 6px;
}
.editing .group-body {
  gap: 5px;
  padding-left: 9px;
}

/* Formula bar */
.formula {
  display: flex;
  flex: none;
  height: 29px;
  padding: 4px 2px 4px 0;
  border-bottom: 1px solid #8d9196;
  background: linear-gradient(#c9d3d6, #c9d3d6 4px, #e4e8f3 5px);
}
.formula input {
  border: 0;
  outline: 0;
  font: inherit;
  font-size: 12px;
  color: #000;
  background: #fff;
}
.namebox {
  display: flex;
  align-items: center;
  width: 161px;
  padding-right: 7px;
  border: 1px solid #a5a9b2;
  border-right: 0;
  background: #fff;
}
.namebox input {
  flex: 1;
  min-width: 0;
  padding: 0 6px 0 0;
  text-align: center;
}
.fx {
  display: flex;
  align-items: center;
  justify-content: space-between;
  width: 84px;
  padding: 0 6px 0 4px;
  border: 1px solid #a5a9b2;
  border-radius: 12px 0 0 12px;
  background: #e4e4ef;
}
.dot {
  width: 9px;
  height: 9px;
  border-radius: 50%;
  background: linear-gradient(#aeb4bb, #f3f5f6);
}
.fx button {
  font-family: "Liberation Serif", serif;
  font-size: 15px;
  font-style: italic;
  font-weight: bold;
  line-height: 16px;
}
.fx small {
  font-size: 11px;
  padding-top: 4px;
}
.formula .formula-input {
  flex: 1;
  min-width: 0;
  border: solid #a5a9b2;
  border-width: 1px 0;
}
.expand {
  width: 15px;
  border: 1px solid #b0b4be;
  background: #e0e5ee;
}

/* Grid */
.workspace {
  display: flex;
  flex: 1;
  min-height: 0;
}
.viewport {
  flex: 1;
  min-width: 0;
  overflow: hidden;
  background: #fff;
}
.sheet {
  width: 100%;
  table-layout: fixed;
  border-collapse: collapse;
}
.sheet .col-head { width: 33px; }
.sheet .col-a { width: 107px; }
.sheet .col { width: 92px; }
.sheet th,
.sheet td {
  padding: 0;
  overflow: hidden;
  white-space: nowrap;
  vertical-align: middle;
  border: solid #d9dadb;
  border-width: 0 1px 1px 0;
}
.sheet th {
  font-size: 15px;
  font-weight: normal;
  line-height: 14px;
  border-color: #a9adb8;
  background: #dfe6ef;
}
.sheet thead th {
  height: 22px;
  line-height: 20px;
  background: #e5e5ef;
}
.sheet thead th.here {
  border-color: #c09138;
  background: linear-gradient(#fbd768, #ffe56b);
}
.sheet tbody th.here {
  border-color: #c09138;
  background: #ffdf62;
}
.corner::after {
  content: "";
  display: block;
  width: 14px;
  height: 14px;
  margin-left: 15px;
  background: #c3c5d0;
  clip-path: polygon(100% 0, 100% 100%, 0 100%);
}
.sheet td {
  padding-left: 3px;
  font-family: Lato, "Noto Sans", sans-serif;
  font-size: 13px;
  line-height: 14px;
  color: #000;
}
.sheet td.code,
.sheet td.caption {
  border-right-color: #dce6f6;
  border-bottom: 3px solid #000;
  background: #dce6f6;
}
.sheet td.caption {
  font-family: "Noto Sans", sans-serif;
}
.sheet td.code {
  border-right-color: #c5d79b;
  background: #c5d79b;
  font-size: 12px;
}
.sheet td.above {
  border-bottom-color: #dce6f6;
}
.sheet td.label,
.sheet td.mark {
  border-right-color: #000;
  border-bottom: 1px solid #000;
  background: #ffbd8a;
}
.sheet td.label {
  box-shadow: inset 1px 0 #000;
}
.sheet td.mark {
  border-bottom-width: 3px;
}
.sheet .last td.label { border-bottom-width: 3px; }
.sheet .last td.mark { border-bottom-width: 1px; }
.sheet td.selected {
  position: relative;
  overflow: visible;
}
.selected::before {
  content: "";
  position: absolute;
  inset: -2px;
  border: 3px solid #0b0a1c;
}
.selected::after {
  content: "";
  position: absolute;
  right: -4px;
  bottom: -4px;
  width: 6px;
  height: 6px;
  border: solid #fff;
  border-width: 1px 0 0 1px;
  background: #0b0a1c;
}

/* Scroll bars */
.tri {
  background: #3e4250;
}
.tri.up,
.tri.down {
  width: 9px;
  height: 5px;
  align-self: center;
}
.tri.left,
.tri.right {
  width: 5px;
  height: 9px;
}
.tri.left { clip-path: polygon(100% 0, 100% 100%, 0 50%); }
.tri.right { clip-path: polygon(0 0, 100% 50%, 0 100%); }
.split {
  flex: none;
  border: 2px solid #8b8f98;
  background: #fff;
}
.thumb {
  display: flex;
  align-items: center;
  justify-content: center;
  flex: 1;
  border: 1px solid #8b939b;
  border-radius: 2px;
}
.track {
  display: flex;
  flex: 1;
}
.vscroll {
  display: flex;
  flex-direction: column;
  width: 20px;
  padding-right: 4px;
  background: linear-gradient(90deg, #d3dae0, #e3e8ef 16px, #8b8f98 16px, #8b8f98 17px, #dfe6ef 17px);
}
.vscroll .split {
  height: 8px;
}
.vscroll button {
  height: 17px;
}
.vscroll .track {
  padding: 19px 1px 19px 0;
}
.vscroll .thumb {
  background: linear-gradient(90deg, #f5f8fa, #d3dade);
}
.vscroll .grip {
  width: 8px;
  height: 8px;
  background: repeating-linear-gradient(#8b8f98, #8b8f98 1px, transparent 1px, transparent 2px);
}

/* Sheet tabs */
.sheetbar {
  display: flex;
  flex: none;
  height: 17px;
  padding-right: 20px;
  border-top: 1px solid #8d9196;
  border-bottom: 1px solid #8d9196;
  background: #dfe6ef;
}
.sheet-nav {
  display: flex;
  width: 63px;
  padding: 0 3px;
  justify-content: space-between;
  border-right: 1px solid #8f96a5;
}
.sheet-nav button {
  width: 12px;
}
.sheet-tab {
  padding: 0 4px 0 1px;
  line-height: 14px;
  background: #e9eaf2;
}
.sheet-tab.current {
  padding-left: 8px;
  font-size: 12px;
  font-weight: bold;
  background: #fff;
}
.hscroll {
  display: flex;
  width: 40%;
  margin-left: auto;
  background: #d9dfe8;
}
.hscroll .split {
  width: 8px;
}
.hscroll button {
  width: 17px;
}
.hscroll .track {
  padding-right: 34px;
}
.hscroll .thumb {
  background: linear-gradient(#f3f8f9, #d3dade);
}
.hscroll .grip {
  width: 8px;
  height: 7px;
  background: repeating-linear-gradient(90deg, #8b8f98, #8b8f98 1px, transparent 1px, transparent 2px);
}

/* Status bar */
.status {
  display: flex;
  align-items: center;
  flex: none;
  height: 22px;
  padding-right: 4px;
  border-bottom: 2px solid #40445a;
  background: linear-gradient(#eef1f1, #c3caca);
}
.ready {
  width: 62px;
  padding-left: 8px;
  line-height: 18px;
  border-right: 1px solid #7f858b;
}
.views {
  display: flex;
  margin-left: auto;
  padding-left: 4px;
  border-left: 1px solid #7f858b;
}
.views button {
  width: 19px;
  height: 19px;
}
.views .on {
  border: 1px solid #c08a2c;
  border-radius: 2px;
  background: #ffe267;
}
.zoom-value {
  padding: 0 8px 0 9px;
}
.zoom {
  width: 100px;
  height: 16px;
  margin: 0;
  appearance: none;
  background: linear-gradient(#7c8188, #7c8188) center / 100% 1px no-repeat;
}
.zoom::-webkit-slider-thumb {
  appearance: none;
  width: 9px;
  height: 13px;
  background: linear-gradient(90deg, #6c707a 1px, #fff 1px, #fff 8px, #6c707a 8px);
  border-top: 1px solid #6c707a;
  border-bottom: 3px solid #6c707a;
  clip-path: polygon(0 0, 100% 0, 100% 65%, 50% 100%, 0 65%);
}
```
FILE: script.js
```js
const columns = 'ABCDEFGHIJKLMN'.split('');
const captions = ['Longueur', 'largueur', 'hauteur'];

// [row number, height, kind, text]
const rows = [
  [2, 20, 'title', 'EXEMPLE1'],
  [3, 17, 'head', '1 005 6789 00'],
  [4, 17, 'item', 'a'],
  [5, 17, 'item', 'b'],
  [6, 18, 'item', 'c'],
  [7, 18, 'item', 'd'],
  [8, 22, 'item', 'e'],
  [9, 22, 'last', 'f'],
  [10, 22, 'blank', ''],
  [11, 19, 'title', 'EXEMPLE 2'],
  [12, 21, 'head', '1 006 2598 06'],
  [13, 22, 'item', 'a1'],
  [14, 22, 'item', 'e5'],
  [15, 22, 'item', 'f5'],
  [16, 22, 'item', 'd5'],
  [17, 22, 'item', 'x9'],
  [18, 22, 'item', 'd9'],
  [19, 22, 'last', 'd6'],
  [20, 22, 'blank', ''],
  [21, 19, 'title', 'EXEMPLE 3'],
  [22, 21, 'head', '2 004 0009 15'],
  [23, 22, 'item', 'A5'],
  [24, 22, 'item', 'S4'],
  [25, 22, 'item', 'G9'],
  [26, 22, 'item', 'D5'],
  [27, 22, 'last', 'N6'],
  ['', 22, 'blank', '']
];

const active = { column: 'G', row: 16 };

function cell(tag, className, text) {
  const el = document.createElement(tag);
  if (className) el.className = className;
  el.textContent = text;
  return el;
}

function dataCell(kind, text, index) {
  const first = index === 0;
  if (index < 4) {
    if (kind === 'title') return cell('td', 'above', first ? text : '');
    if (kind === 'head') return cell('td', first ? 'code' : 'caption', first ? text : captions[index - 1]);
    if (kind === 'item' || kind === 'last') return cell('td', first ? 'label' : 'mark', first ? text : 'x');
  }
  return cell('td', '', '');
}

// Columns and their letters; the last one is cut off by the scroll bar
const cols = document.getElementById('cols');
const letters = document.createElement('tr');
cols.appendChild(cell('col', 'col-head', ''));
letters.appendChild(cell('th', 'corner', ''));
columns.forEach((letter, i) => {
  cols.appendChild(cell('col', i === 0 ? 'col-a' : 'col', ''));
  letters.appendChild(cell('th', letter === active.column ? 'here' : '', letter));
});
cols.appendChild(cell('col', '', ''));
letters.appendChild(cell('th', '', ''));
document.getElementById('head').appendChild(letters);

rows.forEach(([number, height, kind, text]) => {
  const tr = document.createElement('tr');
  tr.className = kind;
  tr.style.height = height + 'px';
  tr.appendChild(cell('th', number === active.row ? 'here' : '', number));
  for (let i = 0; i <= columns.length; i++) {
    const td = dataCell(kind, text, i);
    if (number === active.row && columns[i] === active.column) td.classList.add('selected');
    tr.appendChild(td);
  }
  document.getElementById('rows').appendChild(tr);
});
```
